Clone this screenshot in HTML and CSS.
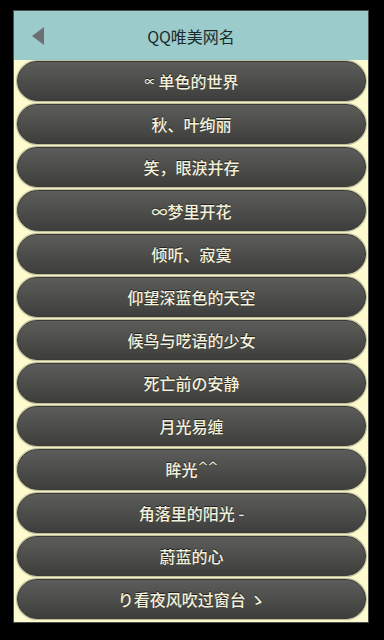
FILE: index.html
```html
<!DOCTYPE html>
<html lang="zh">
<head>
<meta charset="utf-8">
<title>QQ唯美网名</title>
<link rel="stylesheet" href="styles.css">
</head>
<body>
<div class="screen">
  <header class="bar">
    <span class="back"><svg width="12" height="18" viewBox="0 0 12 18"><polygon points="12,0 12,18 0,9" fill="#6a6f72"/></svg></span>
    <h1 class="title">QQ唯美网名</h1>
    <span></span>
  </header>
  <div class="list">
    <div class="item"><span class="small">∝</span> 单色的世界</div>
    <div class="item">秋、叶绚丽</div>
    <div class="item">笑，眼淚并存</div>
    <div class="item">∞梦里开花</div>
    <div class="item">倾听、寂寞</div>
    <div class="item">仰望深蓝色的天空</div>
    <div class="item">候鸟与呓语的少女</div>
    <div class="item">死亡前の安静</div>
    <div class="item">月光易缠</div>
    <div class="item">眸光<span class="caret">^^</span></div>
    <div class="item">角落里的阳光 -</div>
    <div class="item">蔚蓝的心</div>
    <div class="item">り看夜风吹过窗台 ゝ</div>
  </div>
</div>
</body>
</html>
```
FILE: styles.css
```css
html, body {
  margin: 0;
  padding: 0;
  background: #000;
}
body {
  font-family: "Noto Sans CJK SC", "Noto Sans", sans-serif;
}
.screen {
  margin: 10px 15px 0 13px;
  border: 1px solid #4e4e4a;
  height: 611px;
  background: #fdfbcf;
  display: flex;
  flex-direction: column;
}
.bar {
  height: 49px;
  flex: none;
  background: #9ccbcc;
  display: grid;
  grid-template-columns: 1fr auto 1fr;
  align-items: center;
}
.back {
  padding-left: 18px;
  display: flex;
  align-items: center;
}
.title {
  margin: 0;
  font-size: 16px;
  font-weight: normal;
  color: #1b2b2c;
  line-height: 20px;
}
.list {
  flex: 1;
  display: flex;
  flex-direction: column;
  gap: 3px;
  padding: 1px 2px 3px 3px;
}
.item {
  flex: 1;
  display: flex;
  align-items: center;
  justify-content: center;
  border-radius: 21px;
  border: 1px solid #3a3a36;
  background: linear-gradient(#5c5c5a, #3e3e3c);
  box-shadow: 0 0 1px 1px rgba(60, 60, 50, 0.35);
  color: #f3f1da;
  font-size: 16px;
  font-weight: 500;
  text-shadow: 0 -1px 0 #222;
}
.small {
  font-size: 11px;
  margin-right: 3px;
}
.caret {
  font-family: "DejaVu Sans", sans-serif;
  font-size: 13px;
  align-self: flex-start;
  margin-top: 9px;
  letter-spacing: -1px;
}
```
